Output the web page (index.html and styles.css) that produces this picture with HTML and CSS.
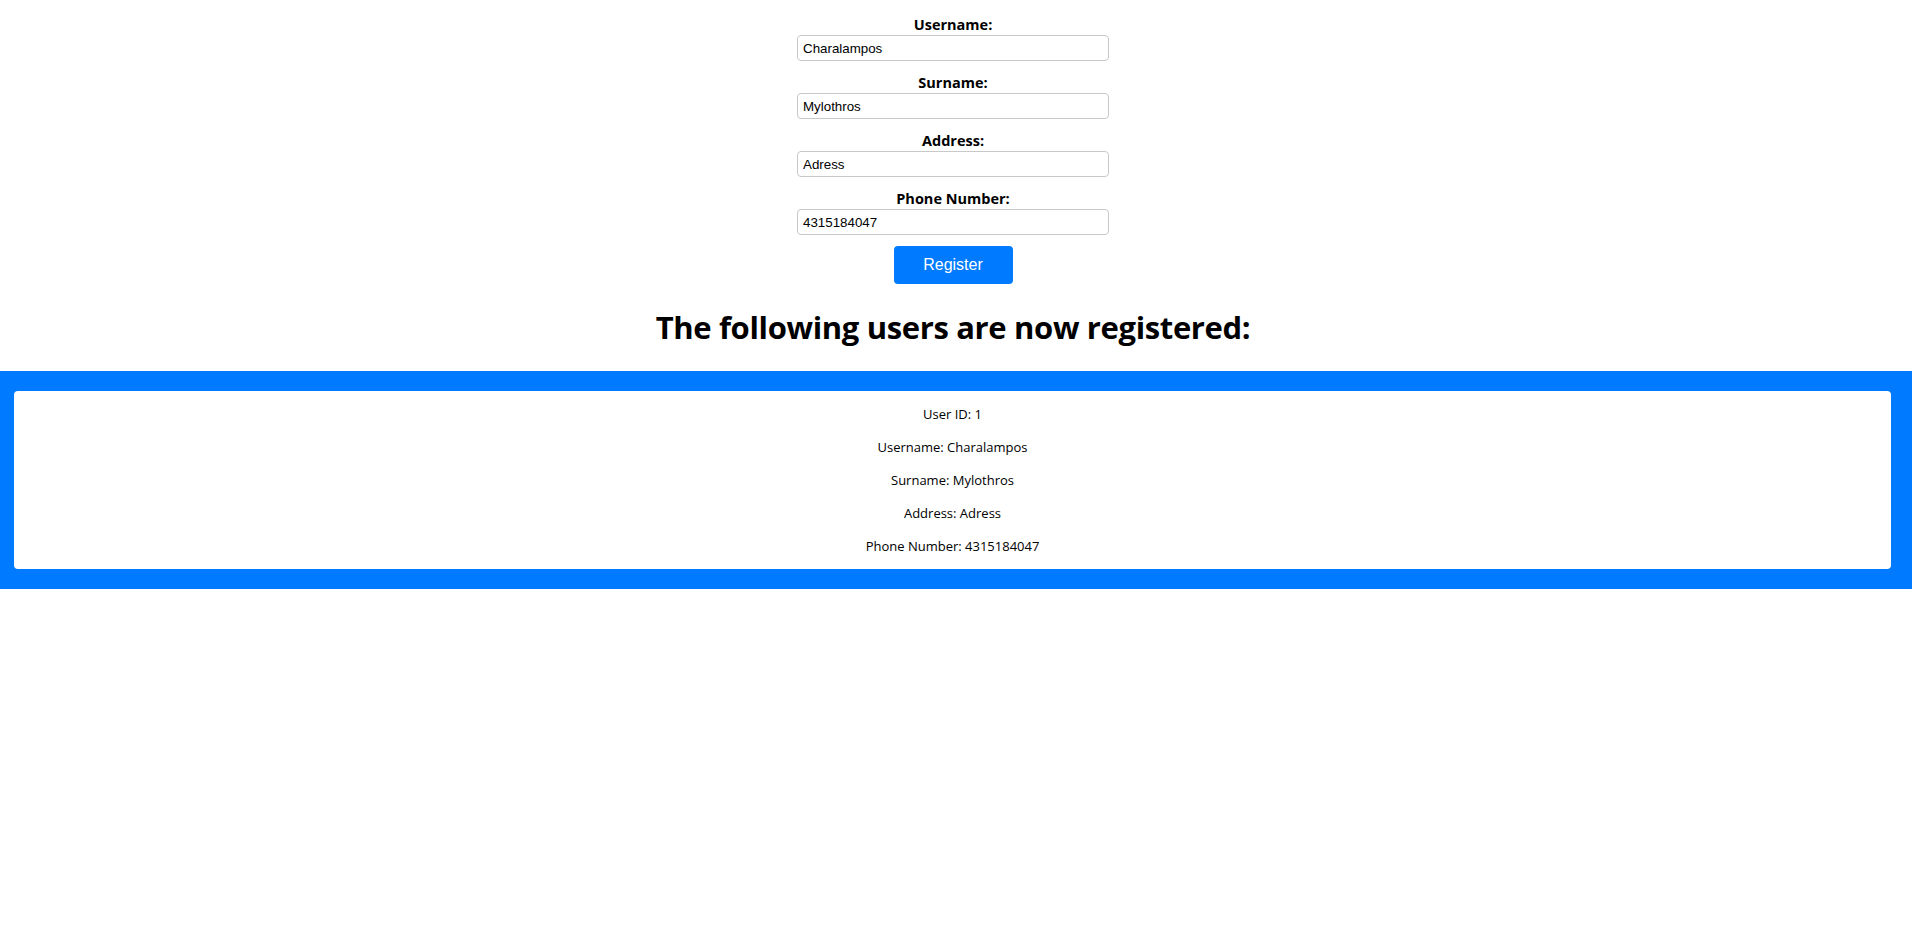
FILE: index.html
```html
<!DOCTYPE html>
<html lang="en">
<head>
<meta charset="utf-8">
<title>User Registration</title>
<link rel="stylesheet" href="styles.css">
</head>
<body>
<div class="page">
  <form class="form">
    <div class="field">
      <label class="label" for="username">Username:</label>
      <input class="input" id="username" type="text" value="Charalampos">
    </div>
    <div class="field">
      <label class="label" for="surname">Surname:</label>
      <input class="input" id="surname" type="text" value="Mylothros">
    </div>
    <div class="field">
      <label class="label" for="address">Address:</label>
      <input class="input" id="address" type="text" value="Adress">
    </div>
    <div class="field">
      <label class="label" for="phone">Phone Number:</label>
      <input class="input" id="phone" type="text" value="4315184047">
    </div>
    <button class="button" type="button">Register</button>
  </form>
  <h1 class="heading">The following users are now registered:</h1>
</div>
<div class="band">
  <div class="card">
    <p class="line">User ID: 1</p>
    <p class="line">Username: Charalampos</p>
    <p class="line">Surname: Mylothros</p>
    <p class="line">Address: Adress</p>
    <p class="line">Phone Number: 4315184047</p>
  </div>
</div>
</body>
</html>
```
FILE: styles.css
```css
* { box-sizing: border-box; }

body {
  margin: 0;
  background: #ffffff;
  color: #000000;
  font-family: "Open Sans", "Noto Sans", sans-serif;
}

.page {
  width: 1906px;
}

.form {
  display: flex;
  flex-direction: column;
  align-items: center;
  gap: 12px;
  padding-top: 15px;
}

.field {
  display: flex;
  flex-direction: column;
  align-items: center;
}

.label {
  font-weight: 700;
  font-size: 14.5px;
  line-height: 20px;
}

.input {
  width: 312px;
  height: 26px;
  border: 1px solid #c8c8c8;
  border-radius: 4px;
  padding: 0 5px;
  font-family: "Liberation Sans", Arial, sans-serif;
  font-size: 13.33px;
  color: #000;
  background: #fff;
}

.button {
  margin-top: -1px;
  width: 119px;
  height: 38px;
  border: none;
  border-radius: 4px;
  background: #007bff;
  color: #fff;
  font-family: "Liberation Sans", Arial, sans-serif;
  font-size: 16px;
}

.heading {
  margin: 21px 0 22px;
  font-size: 31px;
  letter-spacing: -0.35px;
  line-height: 44px;
  font-weight: 700;
  text-align: center;
}

.band {
  width: 1912px;
  background: #007bff;
  padding: 20px 21px 20px 14px;
}

.card {
  display: flex;
  flex-direction: column;
  gap: 13px;
  padding: 13px 0;
  background: #fff;
  border-radius: 4px;
  text-align: center;
  font-size: 13px;
  line-height: 20px;
}

.line {
  margin: 0;
}
```
